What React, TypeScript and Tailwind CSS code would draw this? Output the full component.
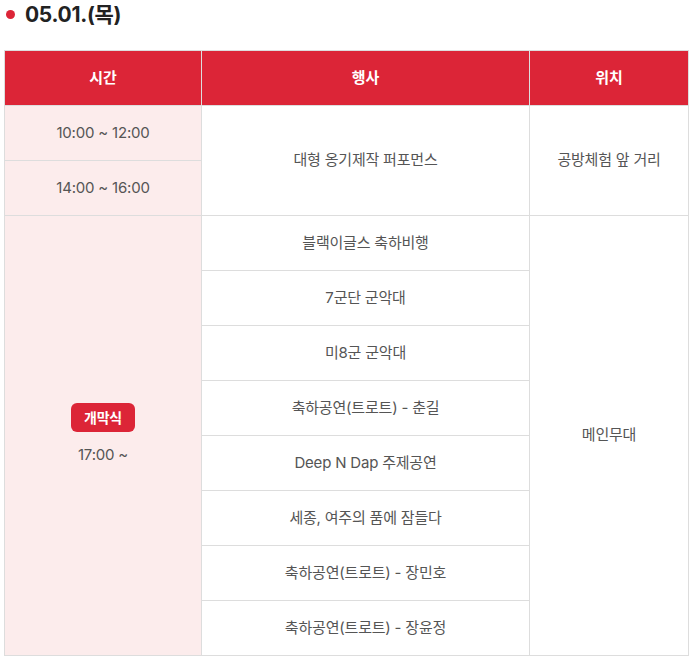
import React from "react";

const font = { fontFamily: "Inter, 'Noto Sans CJK KR', sans-serif" };

const events = [
  "블랙이글스 축하비행",
  "7군단 군악대",
  "미8군 군악대",
  "축하공연(트로트) - 춘길",
  "Deep N Dap 주제공연",
  "세종, 여주의 품에 잠들다",
  "축하공연(트로트) - 장민호",
  "축하공연(트로트) - 장윤정",
];

export default function App() {
  const td = "border border-[#dddddd] text-center text-[15px] text-[#555555] tracking-[-0.2px] h-[55px] p-0";
  return (
    <div className="bg-white w-[693px] h-[663px] overflow-hidden" style={font}>
      <div className="flex items-center h-[28px] pl-[6px] gap-[10px]">
        <span className="w-[9px] h-[9px] rounded-full bg-[#dc2537]" />
        <span className="text-[21px] font-bold text-[#222222] tracking-[-0.3px] leading-none">05.01.(목)</span>
      </div>
      <div className="pl-[4px] pt-[22px]">
        <table className="border-collapse w-[684px] table-fixed">
          <colgroup>
            <col className="w-[197px]" />
            <col className="w-[328px]" />
            <col className="w-[159px]" />
          </colgroup>
          <thead>
            <tr>
              <th className="border border-[#dddddd] bg-[#dc2537] text-white text-[15px] font-bold h-[55px] p-0">시간</th>
              <th className="border border-[#dddddd] bg-[#dc2537] text-white text-[15px] font-bold h-[55px] p-0">행사</th>
              <th className="border border-[#dddddd] bg-[#dc2537] text-white text-[15px] font-bold h-[55px] p-0">위치</th>
            </tr>
          </thead>
          <tbody>
            <tr>
              <td className={td + " bg-[#fcecec]"}>10:00 ~ 12:00</td>
              <td className={td} rowSpan={2}>대형 옹기제작 퍼포먼스</td>
              <td className={td} rowSpan={2}>공방체험 앞 거리</td>
            </tr>
            <tr>
              <td className={td + " bg-[#fcecec]"}>14:00 ~ 16:00</td>
            </tr>
            {events.map((e, i) => (
              <tr key={i}>
                {i === 0 && (
                  <td className={td + " bg-[#fcecec]"} rowSpan={8}>
                    <div className="flex flex-col items-center gap-[12px] pb-[2px]">
                      <span className="inline-flex items-center justify-center w-[64px] h-[29px] rounded-[6px] bg-[#dc2537] text-white text-[14px] font-bold">
                        개막식
                      </span>
                      <span>17:00 ~</span>
                    </div>
                  </td>
                )}
                <td className={td}>{e}</td>
                {i === 0 && (
                  <td className={td} rowSpan={8}>
                    메인무대
                  </td>
                )}
              </tr>
            ))}
          </tbody>
        </table>
      </div>
    </div>
  );
}
